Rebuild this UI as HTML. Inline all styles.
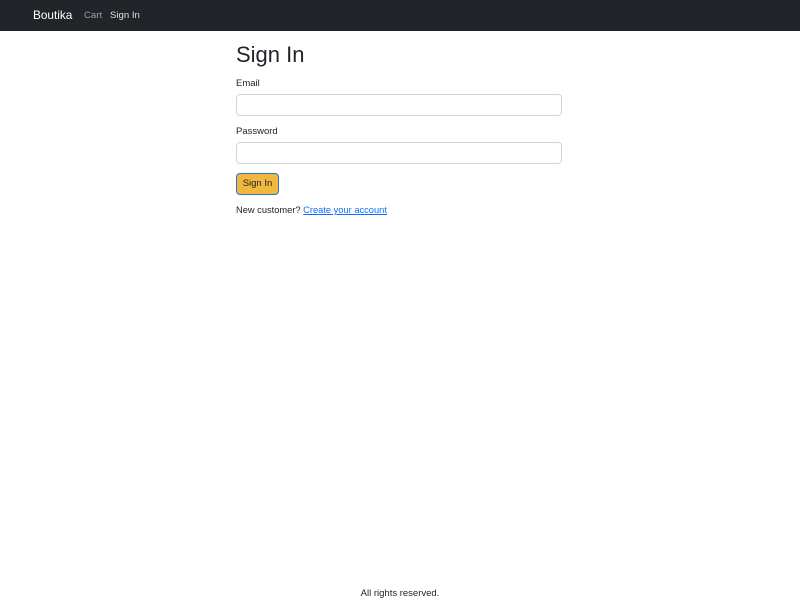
<!DOCTYPE html>
<html><head><style>
*{box-sizing:border-box;margin:0;padding:0}
body{width:800px;height:600px;font-family:"Liberation Sans",sans-serif;color:#212529;background:#fff;position:relative;font-size:10px}
.nav{height:31px;background:#212529;position:relative}
.brand{position:absolute;left:33px;top:8px;color:#fff;font-size:11.8px}
.l1{position:absolute;left:84px;top:10px;color:rgba(255,255,255,.55);font-size:9.6px}
.l2{position:absolute;left:110px;top:10px;color:rgba(255,255,255,.85);font-size:9.6px}
.main{position:absolute;left:236px;top:0;width:326px}
h1{position:absolute;top:42px;font-size:22px;font-weight:400;white-space:nowrap}
.lab{position:absolute;font-size:9.5px}
.in{position:absolute;left:0;width:326px;height:22px;border:1px solid #ced4da;border-radius:4px}
.btn{position:absolute;left:0;top:173px;width:43px;height:22px;background:#f0b83c;border:1px solid #2f6fd6;border-radius:4px;font-size:9.5px;text-align:center;line-height:20px}
.nc{position:absolute;top:205px;font-size:9.3px;white-space:nowrap}
.nc a{color:#0d6efd}
.foot{position:absolute;top:588px;width:800px;text-align:center;font-size:9.5px}
</style></head><body>
<div class="nav"><span class="brand">Boutika</span><span class="l1">Cart</span><span class="l2">Sign In</span></div>
<div class="main">
<h1>Sign In</h1>
<div class="lab" style="top:78px">Email</div>
<div class="in" style="top:94px"></div>
<div class="lab" style="top:126px">Password</div>
<div class="in" style="top:142px"></div>
<div class="btn">Sign In</div>
<div class="nc">New customer? <a href="#">Create your account</a></div>
</div>
<div class="foot">All rights reserved.</div>
</body></html>
